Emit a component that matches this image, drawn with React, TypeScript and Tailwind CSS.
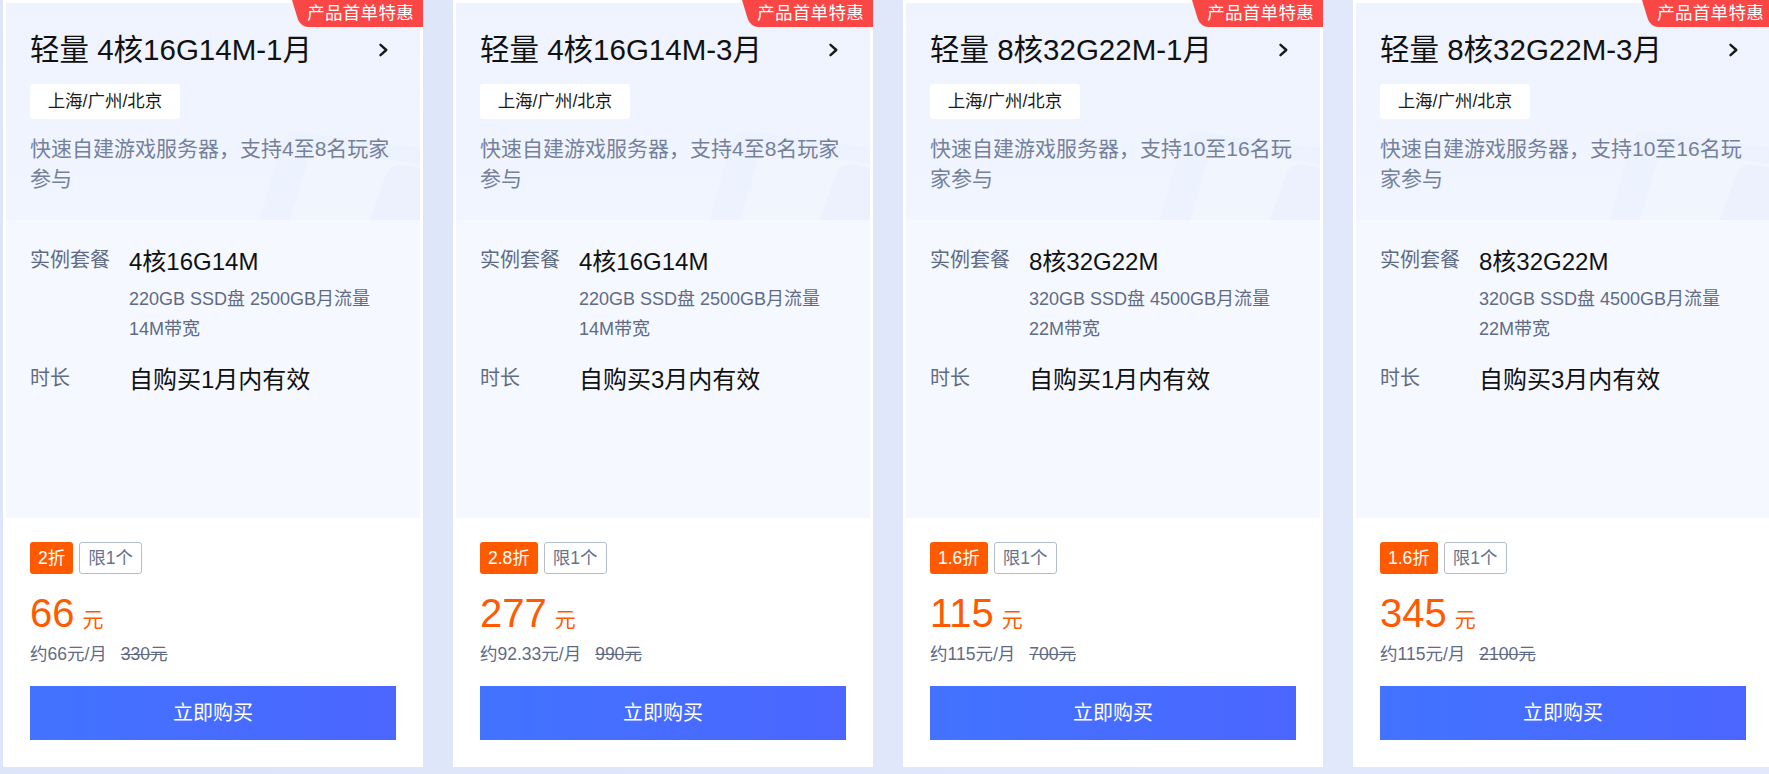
import React from "react";

type Plan = {
  title: string;
  desc: string;
  spec: string;
  disk: string;
  bandwidth: string;
  duration: string;
  discount: string;
  price: string;
  monthly: string;
  original: string;
};

const plans: Plan[] = [
  {
    title: "轻量 4核16G14M-1月",
    desc: "快速自建游戏服务器，支持4至8名玩家参与",
    spec: "4核16G14M",
    disk: "220GB SSD盘 2500GB月流量",
    bandwidth: "14M带宽",
    duration: "自购买1月内有效",
    discount: "2折",
    price: "66",
    monthly: "约66元/月",
    original: "330元",
  },
  {
    title: "轻量 4核16G14M-3月",
    desc: "快速自建游戏服务器，支持4至8名玩家参与",
    spec: "4核16G14M",
    disk: "220GB SSD盘 2500GB月流量",
    bandwidth: "14M带宽",
    duration: "自购买3月内有效",
    discount: "2.8折",
    price: "277",
    monthly: "约92.33元/月",
    original: "990元",
  },
  {
    title: "轻量 8核32G22M-1月",
    desc: "快速自建游戏服务器，支持10至16名玩家参与",
    spec: "8核32G22M",
    disk: "320GB SSD盘 4500GB月流量",
    bandwidth: "22M带宽",
    duration: "自购买1月内有效",
    discount: "1.6折",
    price: "115",
    monthly: "约115元/月",
    original: "700元",
  },
  {
    title: "轻量 8核32G22M-3月",
    desc: "快速自建游戏服务器，支持10至16名玩家参与",
    spec: "8核32G22M",
    disk: "320GB SSD盘 4500GB月流量",
    bandwidth: "22M带宽",
    duration: "自购买3月内有效",
    discount: "1.6折",
    price: "345",
    monthly: "约115元/月",
    original: "2100元",
  },
];

// faint cube artwork in the header corner
const HeaderArt = () => (
  <svg
    className="pointer-events-none absolute bottom-0 right-0"
    width="200"
    height="130"
    viewBox="0 0 200 130"
    fill="none"
  >
    <path d="M40 130 L62 52 Q66 40 80 42 L200 58 L200 130 Z" fill="#e9effd" opacity="0.45" />
    <path d="M70 130 L88 70 Q92 58 106 60 L200 74 L200 130 Z" fill="#ffffff" opacity="0.25" />
    <path d="M150 130 L166 84 Q172 72 186 75 L200 78 L200 130 Z" fill="#e6edfd" opacity="0.45" />
  </svg>
);

const Chevron = () => (
  <svg width="12" height="14" viewBox="0 0 12 14" fill="none" className="mr-[6px] shrink-0">
    <path d="M2.5 1.8 L8.3 7 L2.5 12.2" stroke="#1a1a1a" strokeWidth="2.4" strokeLinecap="round" strokeLinejoin="round" />
  </svg>
);

const Card = ({ plan }: { plan: Plan }) => {
  return (
    <div className="relative flex h-[767px] w-[420px] shrink-0 flex-col overflow-hidden bg-white p-[3px]">
      {/* header */}
      <div className="relative h-[217px] shrink-0 bg-gradient-to-b from-[#eef3fe] to-[#f0f5ff] px-[24px] pt-[27px]">
        <HeaderArt />
        <div className="relative flex items-center justify-between">
          <span className="text-[29.5px] leading-[40px] text-[#111]">{plan.title}</span>
          <Chevron />
        </div>
        <div className="relative mt-[14px] flex h-[35px] w-[150px] items-center justify-center rounded-[3px] bg-white text-[17.5px] text-[#1a1a1a]">
          上海/广州/北京
        </div>
        <p className="relative mt-[15px] text-[21px] leading-[30px] text-[#75819b]">{plan.desc}</p>
      </div>

      {/* spec */}
      <div className="h-[298px] shrink-0 bg-[#f5f8ff] px-[24px] pt-[26px]">
        <div className="flex items-start">
          <span className="w-[99px] shrink-0 text-[20px] leading-[28px] text-[#5f6b85]">实例套餐</span>
          <div>
            <div className="text-[24px] leading-[32px] text-[#111]">{plan.spec}</div>
            <div className="mt-[6px] text-[18px] leading-[30px] text-[#5f6b85]">
              <div>{plan.disk}</div>
              <div>{plan.bandwidth}</div>
            </div>
          </div>
        </div>
        <div className="mt-[20px] flex items-start">
          <span className="w-[99px] shrink-0 text-[20px] leading-[28px] text-[#5f6b85]">时长</span>
          <div className="text-[24px] leading-[32px] text-[#111]">{plan.duration}</div>
        </div>
      </div>

      {/* price */}
      <div className="flex-1 bg-white px-[24px] pt-[24px]">
        <div className="flex gap-[6px]">
          <span className="flex h-[32px] items-center rounded-[3px] bg-[#ff5a00] px-[8px] text-[17.5px] text-white">
            {plan.discount}
          </span>
          <span className="flex h-[32px] items-center rounded-[3px] border border-[#b5bdcc] px-[8px] text-[17.5px] text-[#67738d]">
            限1个
          </span>
        </div>
        <div className="mt-[15px] flex items-baseline text-[#ff5a00]">
          <span className="text-[40px] leading-[48px]">{plan.price}</span>
          <span className="ml-[8px] text-[21px]">元</span>
        </div>
        <div className="mt-[3.5px] flex gap-[14px] text-[17.5px] leading-[26px] text-[#5f6b85]">
          <span>{plan.monthly}</span>
          <span className="line-through">{plan.original}</span>
        </div>
        <button className="mt-[19.5px] flex h-[54px] w-full items-center justify-center bg-gradient-to-r from-[#4273ff] to-[#4b66ff] text-[20px] text-white">
          立即购买
        </button>
      </div>

      {/* 首单 badge */}
      <div className="absolute right-[-10px] top-0 z-10 h-[27px] w-[141px] origin-top skew-x-[17deg] rounded-bl-[8px] bg-[#fb4646]" />
      <span className="absolute right-[9px] top-0 z-10 text-[17.5px] leading-[27px] tracking-[0.3px] text-white">
        产品首单特惠
      </span>
    </div>
  );
};

export default function App() {
  return (
    <div className="h-[774px] w-[1769px] overflow-hidden bg-gradient-to-r from-[#dde5f9] to-[#e3e9fb] font-['Liberation_Sans','Noto_Sans_CJK_SC',sans-serif]">
      <div className="flex gap-[30px] pl-[3px]">
        {plans.map((p) => (
          <Card key={p.title} plan={p} />
        ))}
      </div>
    </div>
  );
}
